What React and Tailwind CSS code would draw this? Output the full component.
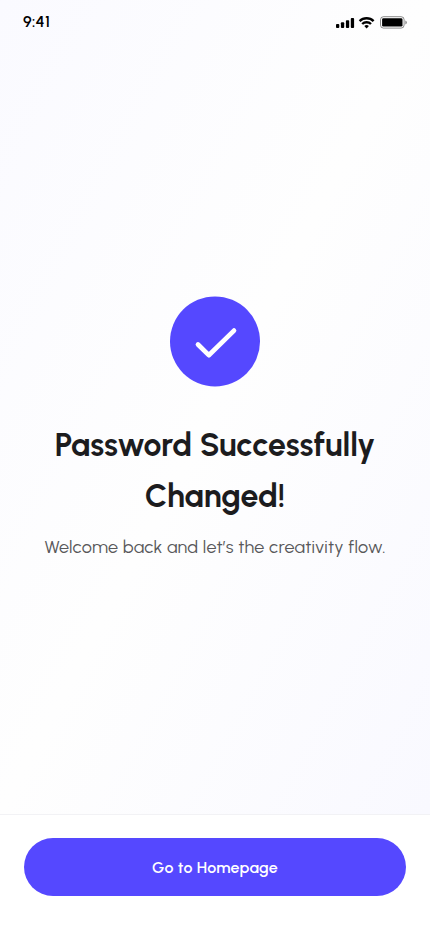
function StatusBar() {
  return (
    <header className="flex h-11 items-center justify-between pl-[23px] pr-[23px] text-black">
      <span className="text-[16px] leading-none font-semibold tracking-[0.3px]">9:41</span>
      <div className="flex items-center">
        <svg width="72" height="14" viewBox="0 0 72 14" fill="none">
          <g fill="#000">
            <rect x="1" y="9" width="3.3" height="4" rx="0.9" />
            <rect x="5.9" y="7.3" width="3.3" height="5.7" rx="0.9" />
            <rect x="10.9" y="5.2" width="3.3" height="7.8" rx="0.9" />
            <rect x="15.8" y="3" width="3.3" height="10" rx="0.9" />
          </g>
          <g stroke="#000" strokeWidth="2.4">
            <path d="M24.6 6.1a10.1 10.1 0 0 1 14 0" />
            <path d="M27.2 9a6.4 6.4 0 0 1 8.8 0" />
          </g>
          <path d="M31.6 13.4 29.3 11.1a3.2 3.2 0 0 1 4.6 0z" fill="#000" />
          <rect x="45.5" y="1.7" width="23.6" height="11.4" rx="3" stroke="#000" strokeOpacity="0.45" />
          <rect x="47.1" y="3.3" width="20.4" height="8.2" rx="1.3" fill="#000" />
          <path d="M70.4 5.6v3.8a2 2 0 0 0 0-3.8z" fill="#000" fillOpacity="0.5" />
        </svg>
      </div>
    </header>
  );
}

export default function App() {
  return (
    <div className="flex h-[932px] w-[430px] flex-col overflow-hidden bg-white font-[Urbanist,Inter,Lato,sans-serif]">
      <div className="flex h-[814px] flex-col bg-linear-to-br from-[#fafaff] via-[#fefefe] to-[#f9f9ff]">
        <StatusBar />
        <main className="flex flex-col items-center pt-[252px]">
          <svg width="90" height="91" viewBox="0 0 90 91" fill="none">
            <circle cx="45" cy="45.4" r="45" fill="#5548ff" />
            <path
              d="M28 48.5 38.8 59.2 64 34.6"
              stroke="#fff"
              strokeWidth="4.7"
              strokeLinecap="round"
              strokeLinejoin="round"
            />
          </svg>
          <h1 className="mt-[33px] text-center text-[32px] leading-[51px] font-bold whitespace-nowrap text-[#1c1c1e]">
            Password Successfully
            <br />
            Changed!
          </h1>
          <p className="mt-[11px] text-[18px] leading-[29px] font-normal tracking-[0.2px] whitespace-nowrap text-[#58585a]">
            Welcome back and let’s the creativity flow.
          </p>
        </main>
      </div>
      <footer className="flex flex-1 flex-col border-t border-[#f2f2f5] bg-white px-6 pt-[23px]">
        <button className="h-[58px] w-full rounded-full bg-[#5548ff] pt-0.5 text-[16px] font-semibold tracking-[0.24px] text-white">
          Go to Homepage
        </button>
      </footer>
    </div>
  );
}
